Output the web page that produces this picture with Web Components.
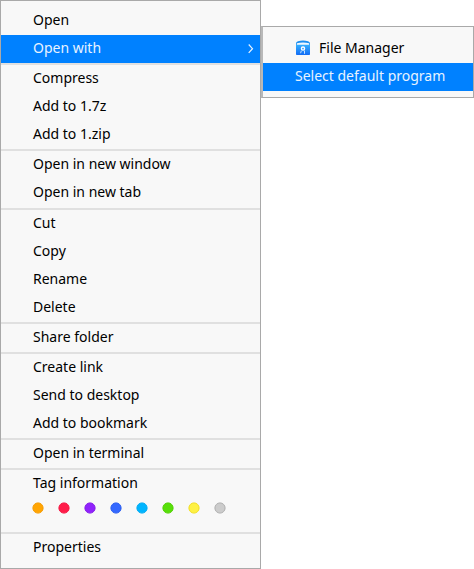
<!DOCTYPE html>
<html lang="en"><head><meta charset="utf-8"><title>Context menu</title>
<style>
html,body{margin:0;background:#fff}
body{width:474px;height:569px;overflow:hidden;font:14px/28px "Noto Sans",sans-serif;color:#000}
</style></head><body>
<menu-stage>
<menu-panel class="main">
<menu-item>Open</menu-item><menu-item active arrow>Open with</menu-item><menu-rule></menu-rule>
<menu-item>Compress</menu-item><menu-item>Add to 1.7z</menu-item><menu-item>Add to 1.zip</menu-item><menu-rule></menu-rule>
<menu-item>Open in new window</menu-item><menu-item>Open in new tab</menu-item><menu-rule style="margin-top:1px"></menu-rule>
<menu-item>Cut</menu-item><menu-item>Copy</menu-item><menu-item>Rename</menu-item><menu-item>Delete</menu-item><menu-rule></menu-rule>
<menu-item>Share folder</menu-item><menu-rule></menu-rule>
<menu-item>Create link</menu-item><menu-item>Send to desktop</menu-item><menu-item>Add to bookmark</menu-item><menu-rule></menu-rule>
<menu-item>Open in terminal</menu-item><menu-rule></menu-rule>
<menu-item>Tag information</menu-item><tag-colors></tag-colors><menu-rule></menu-rule>
<menu-item>Properties</menu-item>
</menu-panel>
<menu-panel slot="sub" class="sub" sub>
<menu-item><file-manager-icon slot="icon"></file-manager-icon>File Manager</menu-item>
<menu-item active>Select default program</menu-item>
</menu-panel>
</menu-stage>
<script>
const define=(name,html)=>customElements.define(name,class extends HTMLElement{
  constructor(){super();this.attachShadow({mode:'open'}).innerHTML=html}
});
define('menu-stage',`<style>:host{display:grid;grid-template-columns:261px 213px;height:569px;align-items:start}
.sub{padding-top:26px}</style><slot></slot><div class="sub"><slot name="sub"></slot></div>`);
define('menu-panel',`<style>:host{display:flex;flex-direction:column;box-sizing:border-box;height:569px;background:#f8f8f8;border:1px solid #a9a9a9;padding-top:6px}
:host([sub]){height:72px;border-left:2px solid #b8b8b8;padding-top:8px}</style><slot></slot>`);
define('menu-item',`<style>:host{display:flex;align-items:center;flex:none;height:28px;padding:0 8px 0 32px;white-space:nowrap;box-sizing:border-box}
:host([active]){background:#0081ff;color:#e8f3ff}
.label{flex:1;position:relative;top:-1px}svg{display:none}:host([arrow]) svg{display:block;margin-right:-3px}</style>
<slot name="icon"></slot><span class="label"><slot></slot></span>
<svg width="8" height="12" viewBox="0 0 8 12" fill="none" stroke="#e8f3ff" stroke-width="1.2"><path d="M1.7 1.5 5.5 5.7 1.7 9.9"/></svg>`);
define('menu-rule',`<style>:host{display:block;flex:none;height:2px;background:#e0e0e0}</style>`);
const colors=[['#ffa503','#f69a00'],['#ff1c49','#f51642'],['#9023fc','#841ae9'],['#3468ff','#285cf0'],['#00b5ff','#00abf3'],['#58df0a','#4fd000'],['#fef144','#f2df21'],['#cccccc','#b0b0b0']];
define('tag-colors',`<style>:host{display:block;height:34px;padding:4px 0 0 31px;box-sizing:border-box}svg{display:block}</style>
<svg width="200" height="12">`+
colors.map(([f,s],i)=>`<circle cx="${6+26*i}" cy="6" r="5.1" fill="${f}" stroke="${s}"/>`).join('')+`</svg>`);
define('file-manager-icon',`<style>:host{display:block;width:16px;height:16px;margin:-2px 8px 0 0}svg{display:block}</style>
<svg width="16" height="16" viewBox="0 0 16 16">
<defs><linearGradient id="g" x2="0" y2="1"><stop stop-color="#35b0ff"/><stop offset="1" stop-color="#126cf5"/></linearGradient></defs>
<path d="M1 5V3Q1.4 1.7 3 1.3 8-.3 13 1.3 14.6 1.7 15 3V5z" fill="#1c8ff0"/>
<path d="M1.8 3.2Q8 1.9 14.2 3.2V5H1.8z" fill="#f1f8ff"/>
<path d="M1 4.7h14V14.2q0 .8-.8.8H1.8q-.8 0-.8-.8z" fill="url(#g)"/>
<circle cx="8" cy="8.6" r="1.6" fill="#3d9fff" stroke="#fff" stroke-width="1.3"/>
<path d="M6.3 10.8 5.6 13.2M9.5 10.6V13.8" stroke="#d9ecff" stroke-width=".9" fill="none"/></svg>`);
</script></body></html>
